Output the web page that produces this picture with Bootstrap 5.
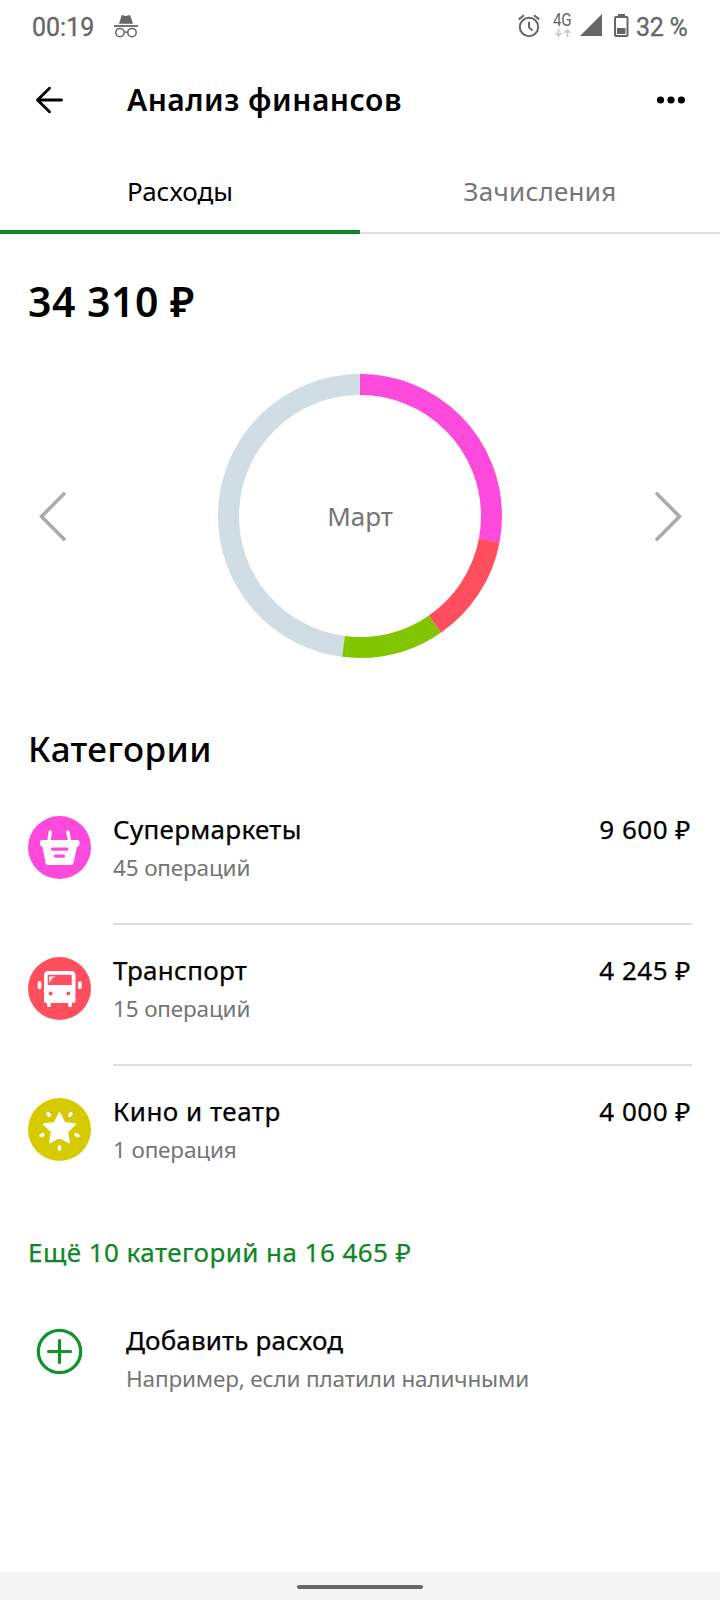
<!DOCTYPE html>
<html lang="ru">
<head>
<meta charset="utf-8">
<meta name="viewport" content="width=device-width, initial-scale=1">
<title>Анализ финансов</title>
<link href="https://cdn.jsdelivr.net/npm/bootstrap@5.3.0/dist/css/bootstrap.min.css" rel="stylesheet">
<style>
body{font-family:"Noto Sans","Open Sans",sans-serif;color:#000;background:#fff;height:1600px;overflow:hidden;white-space:nowrap}
svg{display:block;flex:none}
.statusbar{height:56px;font-family:Roboto,sans-serif;font-size:25px;line-height:56px;color:#666;padding:0 32px}
.incognito{margin:14px 0 0 20px}
.clock{width:62px;-webkit-text-stroke:.3px #666}
.alarm{margin-top:14px}
.network{width:20px;margin:12px 0 0 13px}
.network-label{font-size:17.5px;font-weight:400;line-height:17px;letter-spacing:-.4px;transform:scaleX(.87);transform-origin:0 0}
.signal{margin:14px 0 0 7px}
.battery{margin:14px 0 0 12px}
.battery-text{margin-left:7px;width:52px;letter-spacing:-.3px;-webkit-text-stroke:.3px #666}
.appbar{height:88px;padding:0 34px;font-size:30px;font-weight:600;letter-spacing:.5px;line-height:40px}
.appbar-title{margin-left:63px}
.tabs{height:90px}
.tab-item{border-bottom:2px solid #dedede;font-size:26px;line-height:94px;height:90px}
.tab-item.active{border-bottom:4px solid #0f8626}
.tab-item.muted{letter-spacing:.25px}
.muted{color:#757575}
.total{height:124px;padding:37px 28px 0;font-size:41px;font-weight:600;line-height:60px;letter-spacing:.5px}
.chart{height:316px;padding:0 38px}
.donut{width:284px;height:284px}
.month{font-size:26px;line-height:36px}
.heading{height:110px;padding:51px 28px 0;font-size:35px;font-weight:500;line-height:48px;letter-spacing:.4px}
.cat{height:141px;padding:0 28px}
.cat-icon{margin-top:32px}
.cat-body{margin-left:22px;padding-top:27px;border-bottom:2px solid #dedede}
.cat:last-child .cat-body{border:0}
.name{font-size:26px;line-height:36px;letter-spacing:.3px}
.name,.price,.more{-webkit-text-stroke:.25px currentColor}
.name.spaced{letter-spacing:.5px}
.price{font-size:26px;line-height:36px;letter-spacing:.5px;padding-right:1px}
.sub{font-size:22.5px;line-height:30px;margin-top:6px;letter-spacing:-.15px}
.more{padding:27px 28px 0;height:85px;font-size:26px;line-height:36px;letter-spacing:.45px;color:#0f8626}
.add{padding-left:36px}
.add-icon{margin-top:36px}
.add-body{margin-left:43px;padding-top:30px}
.add-body .name{letter-spacing:.15px}
.home-strip{height:28px;background:#f4f4f4}
.pill{width:126px;height:4px;border-radius:2px;background:#666;margin-top:2px}
</style>
</head>
<body class="d-flex flex-column">
<header class="statusbar d-flex align-items-start flex-shrink-0">
  <span class="clock">00:19</span>
  <svg class="incognito" width="24" height="24" viewBox="0 0 24 24" fill="none" stroke="#666" stroke-width="1.5"><path d="M5 9.700 7.600 1.600Q8 .8 9 1.200l2.800.9L15 1.200q1-.4 1.300.5L19 9.700z" fill="#666" stroke="none"/><path d="M0 12h24" stroke-width="1.8"/><circle cx="6" cy="18.600" r="4.200"/><circle cx="18" cy="18.600" r="4.200"/><path d="M10 18.400q2-1 4 0"/></svg>
  <div class="d-flex align-items-start ms-auto">
    <svg class="alarm" width="22" height="24" viewBox="0 0 22 24" fill="none" stroke="#666" stroke-width="2"><circle cx="11" cy="13" r="9.200"/><path d="M11 7.800v5.600l3.600 3.200M.8 5.400 6 1.200M21.200 5.400 16 1.200"/></svg>
    <div class="network">
      <div class="network-label">4G</div>
      <svg width="20" height="8" viewBox="0 0 20 8" fill="none" stroke="#c8c8c8" stroke-width="1.600"><path d="M5.500 0v6.500M2.500 4l3 3 3-3M14.500 8V1.500M11.500 4l3-3 3 3"/></svg>
    </div>
    <svg class="signal" width="22" height="22" viewBox="0 0 22 22"><path d="M0 22 22 0v22z" fill="#666"/></svg>
    <svg class="battery" width="15" height="23" viewBox="0 0 15 23"><path d="M4 0h7v2H4z" fill="#666"/><rect x="1" y="3" width="12.500" height="19" rx="1" fill="none" stroke="#666" stroke-width="2"/><path d="M3 14h8.500v6H3z" fill="#666"/></svg>
    <span class="battery-text">32 %</span>
  </div>
</header>
<div class="appbar d-flex align-items-center flex-shrink-0">
  <svg width="30" height="28" viewBox="0 0 30 28" fill="none" stroke="#000" stroke-width="2.900" stroke-linecap="round" stroke-linejoin="round"><path d="M27.500 14H3.500M15.500 2.300 3.500 14l12 11.700"/></svg>
  <span class="appbar-title">Анализ финансов</span>
  <svg class="ms-auto" width="30" height="10" viewBox="0 0 30 10"><circle cx="4.500" cy="5" r="3.600"/><circle cx="15" cy="5" r="3.600"/><circle cx="25.400" cy="5" r="3.600"/></svg>
</div>
<nav class="tabs d-flex text-center align-items-end flex-shrink-0">
  <div class="tab-item active w-50">Расходы</div>
  <div class="tab-item muted w-50">Зачисления</div>
</nav>
<div class="total flex-shrink-0">34 310 ₽</div>
<div class="chart d-flex align-items-center justify-content-between flex-shrink-0">
  <svg width="30" height="52" viewBox="0 0 30 52" fill="none" stroke="#aaa" stroke-width="3.500"><path d="M27 2.800 3.500 26.500 27 50.200"/></svg>
  <div class="donut d-grid">
    <svg width="284" height="284" viewBox="0 0 284 284" style="grid-area:1/1" fill="none" stroke-width="21">
      <g transform="rotate(-90 142 142)">
        <circle cx="142" cy="142" r="131.500" stroke="#d0dde4" pathLength="34310" stroke-dasharray="16465 17845" stroke-dashoffset="-17845"/>
        <circle cx="142" cy="142" r="131.500" stroke="#82c600" pathLength="34310" stroke-dasharray="4000 30310" stroke-dashoffset="-13845"/>
        <circle cx="142" cy="142" r="131.500" stroke="#ff4e5e" pathLength="34310" stroke-dasharray="4245 30065" stroke-dashoffset="-9600"/>
        <circle cx="142" cy="142" r="131.500" stroke="#fd4adc" pathLength="34310" stroke-dasharray="9600 24710"/>
      </g>
    </svg>
    <div class="month muted text-center align-self-center" style="grid-area:1/1">Март</div>
  </div>
  <svg width="30" height="52" viewBox="0 0 30 52" fill="none" stroke="#aaa" stroke-width="3.500"><path d="M4 2.800 27.500 26.500 4 50.200"/></svg>
</div>
<div class="heading flex-shrink-0">Категории</div>
<div class="flex-shrink-0">
  <div class="cat d-flex align-items-stretch">
    <svg class="cat-icon" width="63" height="63" viewBox="0 0 63 63"><circle cx="31.500" cy="31.500" r="31.500" fill="#fd4adc"/><path d="M14 24h35.500q2 0 2 2v2.500q0 1.700-2.500 2.200L45.500 47q-.5 2-2.500 2H20q-2 0-2.500-2L14.500 30.700Q12 30.200 12 28.500V26q0-2 2-2z" fill="#fff"/><path d="M22.300 16 20.800 26M39.800 16l2.200 10" stroke="#fff" stroke-width="3.400" stroke-linecap="round"/><path d="M24.500 33.100h14.300M27.500 40.100h8" stroke="#fd4adc" stroke-width="3.400" stroke-linecap="round"/></svg>
    <div class="cat-body d-flex justify-content-between flex-grow-1">
      <div><div class="name">Супермаркеты</div><div class="sub muted">45 операций</div></div>
      <div class="price">9 600 ₽</div>
    </div>
  </div>
  <div class="cat d-flex align-items-stretch">
    <svg class="cat-icon" width="63" height="63" viewBox="0 0 63 63"><circle cx="31.500" cy="31.500" r="31.500" fill="#ff4e5e"/><g fill="#fff"><path d="M20.500 14h22.500q4.500 0 4.500 4.500V44q0 2-2 2h-27.500q-2 0-2-2V18.500Q16 14 20.500 14z"/><rect x="9.700" y="24.200" width="3.700" height="8" rx="1.850"/><rect x="50" y="24.200" width="3.700" height="8" rx="1.850"/><rect x="19" y="42" width="3.800" height="8" rx="1.500"/><rect x="40.200" y="42" width="3.800" height="8" rx="1.500"/></g><path d="M20.700 17.800h22q1 0 1 1V28h-24v-9.200q0-1 1-1z" fill="#ff4e5e"/><path d="M21.200 19.500H28q-3 .7-4.500 2.500l-2.300 4z" fill="#fff"/><g fill="#ff4e5e"><circle cx="22.700" cy="36.500" r="1.900"/><circle cx="40.300" cy="36.500" r="1.900"/></g></svg>
    <div class="cat-body d-flex justify-content-between flex-grow-1">
      <div><div class="name">Транспорт</div><div class="sub muted">15 операций</div></div>
      <div class="price">4 245 ₽</div>
    </div>
  </div>
  <div class="cat d-flex align-items-stretch">
    <svg class="cat-icon" width="63" height="63" viewBox="0 0 63 63"><circle cx="31.500" cy="31.500" r="31.500" fill="#d6ca00"/><g fill="#fff"><path d="M31.500 15.300 36.300 25 47 26.300 39.200 33.600 41 44.300 31.500 39 22 44.300 23.800 33.600 16 26.300 26.700 25z" stroke="#fff" stroke-width="2" stroke-linejoin="round"/><ellipse cx="20.700" cy="16.500" rx="1.900" ry="2.800" transform="rotate(-36 20.700 16.500)"/><ellipse cx="42.300" cy="16.500" rx="1.900" ry="2.800" transform="rotate(36 42.300 16.500)"/><ellipse cx="14" cy="37.200" rx="2.800" ry="1.900" transform="rotate(-18 14 37.200)"/><ellipse cx="49" cy="37.200" rx="2.800" ry="1.900" transform="rotate(18 49 37.200)"/><ellipse cx="31.500" cy="49.800" rx="1.900" ry="2.900"/></g></svg>
    <div class="cat-body d-flex justify-content-between flex-grow-1">
      <div><div class="name spaced">Кино и театр</div><div class="sub muted">1 операция</div></div>
      <div class="price">4 000 ₽</div>
    </div>
  </div>
</div>
<div class="more flex-shrink-0">Ещё 10 категорий на 16 465 ₽</div>
<div class="add d-flex align-items-start">
  <svg class="add-icon" width="47" height="47" viewBox="0 0 47 47" fill="none" stroke="#14912b" stroke-width="3.200" stroke-linecap="round"><circle cx="23.500" cy="23.500" r="21.200"/><path d="M23.500 12.500v22M12.500 23.500h22"/></svg>
  <div class="add-body"><div class="name">Добавить расход</div><div class="sub muted">Например, если платили наличными</div></div>
</div>
<footer class="home-strip d-flex align-items-center justify-content-center mt-auto flex-shrink-0"><div class="pill"></div></footer>
<script src="https://cdn.jsdelivr.net/npm/bootstrap@5.3.0/dist/js/bootstrap.bundle.min.js"></script>
</body>
</html>
